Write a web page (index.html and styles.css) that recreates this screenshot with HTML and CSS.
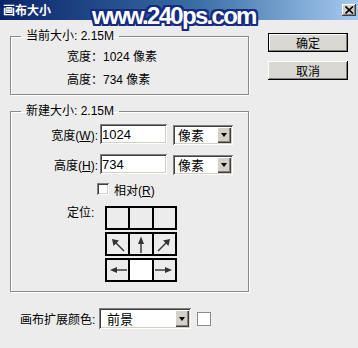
FILE: index.html
```html
<!DOCTYPE html>
<html lang="zh-CN">

<head>
    <meta charset="UTF-8">
    <title>画布大小</title>
    <link rel="stylesheet" href="styles.css">
</head>

<body>
    <div class="window">
        <div class="titlebar">
            <span class="title">画布大小</span>
            <span class="close">
                <svg width="9" height="8" viewBox="0 0 9 8">
                    <path d="M0.5 0.5 L8 7.5 M8 0.5 L0.5 7.5" stroke="#000" stroke-width="1.6" fill="none"/>
                </svg>
            </span>
        </div>
        <div class="watermark">www.240ps.com</div>

        <div class="content">
            <div class="main">
                <fieldset class="group current">
                    <legend>当前大小: 2.15M</legend>
                    <div class="info">宽度：1024 像素</div>
                    <div class="info">高度：734 像素</div>
                </fieldset>

                <fieldset class="group resize">
                    <legend>新建大小: 2.15M</legend>
                    <div class="field-row">
                        <label class="field-label">宽度(<u>W</u>):</label>
                        <input class="field" type="text" value="1024">
                        <div class="select unit">
                            <span>像素</span>
                            <span class="drop"></span>
                        </div>
                    </div>
                    <div class="field-row">
                        <label class="field-label">高度(<u>H</u>):</label>
                        <input class="field" type="text" value="734">
                        <div class="select unit">
                            <span>像素</span>
                            <span class="drop"></span>
                        </div>
                    </div>
                    <div class="check-row">
                        <span class="checkbox"></span>
                        <span>相对(<u>R</u>)</span>
                    </div>
                    <div class="anchor-row">
                        <span class="anchor-label">定位:</span>
                        <div class="anchor-grid">
                            <div class="anchor-line">
                                <span class="cell"></span>
                                <span class="cell"></span>
                                <span class="cell"></span>
                            </div>
                            <div class="anchor-line">
                                <span class="cell">
                                    <svg width="20" height="20" viewBox="0 0 20 20">
                                        <path d="M16 17 L8 9" stroke="#333" stroke-width="1.4"/>
                                        <path d="M4 5 L11 6.5 L5.5 12 Z" fill="#333"/>
                                    </svg>
                                </span>
                                <span class="cell">
                                    <svg width="20" height="20" viewBox="0 0 20 20">
                                        <path d="M10 19 L10 8" stroke="#333" stroke-width="1.4"/>
                                        <path d="M10 2.5 L13 10 L7 10 Z" fill="#333"/>
                                    </svg>
                                </span>
                                <span class="cell">
                                    <svg width="20" height="20" viewBox="0 0 20 20">
                                        <path d="M4 17 L12 9" stroke="#333" stroke-width="1.4"/>
                                        <path d="M16 5 L9 6.5 L14.5 12 Z" fill="#333"/>
                                    </svg>
                                </span>
                            </div>
                            <div class="anchor-line">
                                <span class="cell">
                                    <svg width="20" height="20" viewBox="0 0 20 20">
                                        <path d="M19 10 L8 10" stroke="#333" stroke-width="1.4"/>
                                        <path d="M2 10 L9 7 L9 13 Z" fill="#333"/>
                                    </svg>
                                </span>
                                <span class="cell current-cell"></span>
                                <span class="cell">
                                    <svg width="20" height="20" viewBox="0 0 20 20">
                                        <path d="M1 10 L12 10" stroke="#333" stroke-width="1.4"/>
                                        <path d="M18 10 L11 7 L11 13 Z" fill="#333"/>
                                    </svg>
                                </span>
                            </div>
                        </div>
                    </div>
                </fieldset>

                <div class="fill-row">
                    <span class="fill-label">画布扩展颜色:</span>
                    <div class="select fill">
                        <span>前景</span>
                        <span class="drop"></span>
                    </div>
                    <span class="swatch"></span>
                </div>
            </div>

            <div class="side">
                <button class="btn default" type="button">确定</button>
                <button class="btn" type="button">取消</button>
            </div>
        </div>
    </div>
</body>

</html>
```

FILE: styles.css
```css
* {
    padding: 0;
    margin: 0;
    box-sizing: border-box;
}

body {
    width: 358px;
    height: 348px;
    overflow: hidden;
    background: #ececec;
    font-family: "Liberation Sans", "Noto Sans CJK SC", sans-serif;
    font-size: 12px;
    color: #000;
}

.window {
    position: relative;
    height: 100%;
}

.titlebar {
    height: 20px;
    padding: 0 2px 0 3px;
    background: linear-gradient(90deg, #0a246a 0%, #3a6ea5 55%, #a6caf0 100%);
    display: flex;
    flex-direction: row;
    align-items: center;
    justify-content: space-between;
}

.title {
    color: #fff;
    font-weight: bold;
    font-family: "Noto Sans CJK SC", sans-serif;
    font-size: 12px;
    line-height: 14px;
}

.close {
    width: 14px;
    height: 12px;
    background: #d4d0c8;
    box-shadow: inset -1px -1px 0 #404040, inset 1px 1px 0 #fff, inset -2px -2px 0 #808080;
    display: flex;
    align-items: center;
    justify-content: center;
}

/* site watermark stamped over the title bar */
.watermark {
    position: absolute;
    left: 92px;
    top: 2px;
    color: #fff;
    font-family: "Liberation Sans", sans-serif;
    font-weight: bold;
    font-size: 24px;
    letter-spacing: -1.7px;
    line-height: 28px;
    text-shadow:
        2px 0 0 #152a80, -2px 0 0 #152a80, 0 2px 0 #152a80, 0 -2px 0 #152a80,
        2px 2px 0 #152a80, -2px -2px 0 #152a80, 2px -2px 0 #152a80, -2px 2px 0 #152a80;
}

.content {
    display: flex;
    flex-direction: row;
    padding: 9px 0 0 10px;
}

.main {
    width: 240px;
    display: flex;
    flex-direction: column;
}

.group {
    width: 239px;
    border: 1px solid #8a8a8a;
    box-shadow: inset 1px 1px 0 #fff, 1px 1px 0 #fff;
    min-inline-size: 0;
}

.group legend {
    margin-left: 10px;
    padding: 0 5px;
    line-height: 14px;
}

.current {
    padding: 3px 0 2px 0;
}

.info {
    line-height: 23px;
    padding-left: 56px;
}

.resize {
    margin-top: 9px;
    padding: 6px 0 9px 0;
}

.field-row {
    display: flex;
    flex-direction: row;
    align-items: center;
    height: 20px;
    margin-bottom: 10px;
}

.field-label {
    width: 87px;
    margin-right: 2px;
    text-align: right;
}

.field {
    width: 67px;
    height: 20px;
    padding: 0 2px;
    border: none;
    outline: none;
    background: #fff;
    font: inherit;
    font-size: 13px;
    box-shadow: inset 1px 1px 0 #808080, inset -1px -1px 0 #fff, inset 2px 2px 0 #404040, inset -2px -2px 0 #d4d0c8;
}

.select {
    display: flex;
    flex-direction: row;
    align-items: center;
    justify-content: space-between;
    background: #fff;
    padding: 2px;
    box-shadow: inset 1px 1px 0 #808080, inset -1px -1px 0 #fff, inset 2px 2px 0 #404040, inset -2px -2px 0 #d4d0c8;
}

.select span:first-child {
    padding-left: 3px;
    font-size: 13px;
}

.unit {
    width: 60px;
    height: 20px;
    margin-left: 6px;
    margin-top: 1px;
}

.drop {
    width: 14px;
    height: 100%;
    background: #d4d0c8;
    box-shadow: inset 1px 1px 0 #fff, inset -1px -1px 0 #404040, inset -2px -2px 0 #808080;
    display: flex;
    align-items: center;
    justify-content: center;
}

.drop::after {
    content: "";
    border-left: 3.5px solid transparent;
    border-right: 3.5px solid transparent;
    border-top: 4px solid #000;
    margin-top: 1px;
}

.check-row {
    display: flex;
    flex-direction: row;
    align-items: center;
    height: 14px;
    margin-top: -2px;
    padding-left: 86px;
}

.checkbox {
    width: 12px;
    height: 12px;
    margin-right: 5px;
    background: #fff;
    box-shadow: inset 1px 1px 0 #808080, inset -1px -1px 0 #fff, inset 2px 2px 0 #404040, inset -2px -2px 0 #d4d0c8;
}

.anchor-row {
    display: flex;
    flex-direction: row;
    align-items: flex-start;
    margin-top: 10px;
    padding-left: 56px;
}

.anchor-label {
    width: 38px;
    line-height: 14px;
}

.anchor-grid {
    display: flex;
    flex-direction: column;
    gap: 2px;
}

.anchor-line {
    width: 72px;
    height: 24px;
    border: 2px solid #000;
    display: flex;
    flex-direction: row;
}

.cell {
    flex: 1;
    display: flex;
    align-items: center;
    justify-content: center;
}

.cell + .cell {
    border-left: 2px solid #000;
}

.current-cell {
    background: #fff;
}

.fill-row {
    display: flex;
    flex-direction: row;
    align-items: center;
    margin-top: 16px;
    padding-left: 10px;
}

.fill-label {
    width: 79px;
}

.fill {
    width: 92px;
    height: 21px;
}

.fill span:first-child {
    padding-left: 6px;
}

.swatch {
    width: 14px;
    height: 14px;
    margin-left: 6px;
    background: #fff;
    border: 1px solid #8a8a8a;
}

.side {
    display: flex;
    flex-direction: column;
    gap: 9px;
    margin-left: 18px;
    padding-top: 4px;
}

.btn {
    width: 80px;
    height: 19px;
    border: none;
    outline: none;
    background: #dad8d2;
    font: inherit;
    font-size: 12px;
    box-shadow: inset -1px -1px 0 #000, inset 1px 1px 0 #fff, inset -2px -2px 0 #808080;
}

.btn.default {
    box-shadow: inset 0 0 0 1px #000, inset -2px -2px 0 #808080, inset 2px 2px 0 #fff;
}
```
